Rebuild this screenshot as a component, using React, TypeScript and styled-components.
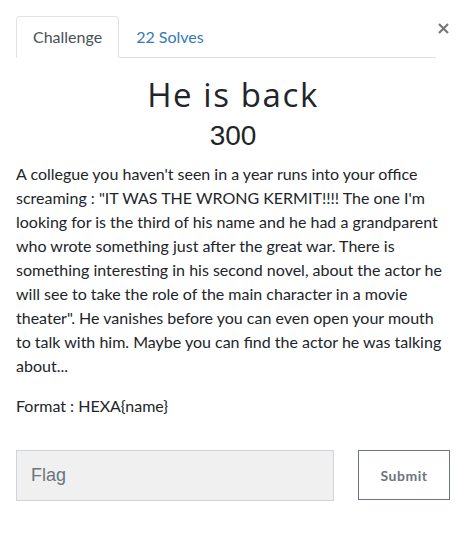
import React from "react";
import styled, { createGlobalStyle } from "styled-components";

const Global = createGlobalStyle`
  html, body { margin: 0; padding: 0; background: #fff; }
  body { font-family: Lato, "Noto Sans", sans-serif; color: #212529; }
  * { box-sizing: border-box; }
`;

const Modal = styled.div`
  width: 466px;
  padding: 16px 16px 0 16px;
`;

const Header = styled.div`
  display: flex;
  align-items: flex-start;
`;

const Tabs = styled.nav`
  flex: 1;
  display: flex;
  border-bottom: 1px solid #dee2e6;
`;

const Tab = styled.a<{ $active?: boolean }>`
  display: block;
  padding: 8px 16px;
  font-size: 16px;
  line-height: 24px;
  margin-bottom: -1px;
  border: 1px solid ${(p) => (p.$active ? "#dee2e6" : "transparent")};
  border-bottom-color: ${(p) => (p.$active ? "#fff" : "transparent")};
  border-radius: 4px 4px 0 0;
  color: ${(p) => (p.$active ? "#495057" : "#337ab7")};
  text-decoration: none;
`;

const Close = styled.button`
  width: 14px;
  height: 22px;
  padding: 0;
  margin-top: 1px;
  border: 0;
  background: none;
  display: flex;
  align-items: center;
  justify-content: center;
  color: #777;
`;

const Title = styled.h3`
  margin: 18px 0 0 0;
  text-align: center;
  font-family: "Open Sans", sans-serif;
  font-weight: 400;
  font-size: 33px;
  line-height: 38px;
  letter-spacing: 1.6px;
  color: #212529;
`;

const Score = styled.h4`
  margin: 5px 0 0 0;
  text-align: center;
  font-family: "Liberation Sans", Arial, sans-serif;
  font-weight: 400;
  font-size: 28px;
  line-height: 34px;
  color: #212529;
`;

const Description = styled.div`
  margin-top: 9px;
  font-size: 16px;
  line-height: 24px;
  p { margin: 0 0 16px 0; }
`;

const FlagRow = styled.form`
  display: grid;
  grid-template-columns: 1fr 92px;
  column-gap: 24px;
  margin-top: 32px;
`;

const FlagInput = styled.input`
  height: 51px;
  padding: 0 14px;
  background: #f0f0f0;
  border: 1px solid #ced4da;
  border-radius: 0;
  font-family: "Liberation Sans", Arial, sans-serif;
  font-size: 18px;
  color: #495057;
  &::placeholder { color: #6c757d; }
  outline: none;
`;

const SubmitButton = styled.button`
  height: 50px;
  background: #fff;
  border: 1px solid #6c757d;
  border-radius: 0;
  color: #6c757d;
  font-family: Lato, sans-serif;
  font-weight: 700;
  font-size: 14px;
  letter-spacing: 0.5px;
`;

export default function App() {
  return (
    <>
      <Global />
      <Modal>
        <Header>
          <Tabs>
            <Tab $active>Challenge</Tab>
            <Tab>22 Solves</Tab>
          </Tabs>
          <Close aria-label="Close">
            <svg width="11" height="11" viewBox="0 0 11 11">
              <path d="M1 1L10 10M10 1L1 10" stroke="currentColor" strokeWidth="2.2" />
            </svg>
          </Close>
        </Header>
        <Title>He is back</Title>
        <Score>300</Score>
        <Description>
          <p>
            A collegue you haven't seen in a year runs into your office screaming : "IT WAS THE WRONG
            KERMIT!!!! The one I'm looking for is the third of his name and he had a grandparent who
            wrote something just after the great war. There is something interesting in his second
            novel, about the actor he will see to take the role of the main character in a movie
            theater". He vanishes before you can even open your mouth to talk with him. Maybe you can
            find the actor he was talking about...
          </p>
          <p>Format : HEXA{"{name}"}</p>
        </Description>
        <FlagRow onSubmit={(e) => e.preventDefault()}>
          <FlagInput placeholder="Flag" />
          <SubmitButton type="submit">Submit</SubmitButton>
        </FlagRow>
      </Modal>
    </>
  );
}
